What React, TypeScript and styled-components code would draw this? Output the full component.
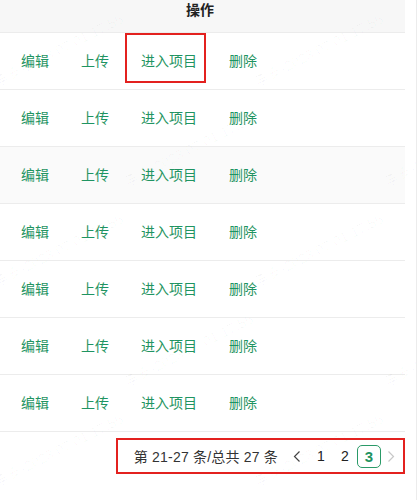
import React from "react";
import styled, { createGlobalStyle, css } from "styled-components";

const GlobalStyle = createGlobalStyle`
  html, body {
    margin: 0;
    padding: 0;
    background: #fff;
  }
  body {
    font-family: "Liberation Sans", "Noto Sans CJK SC", sans-serif;
    font-size: 14px;
    color: #333;
  }
`;

const Page = styled.div`
  position: relative;
  width: 416px;
  height: 500px;
  border-right: 1px solid #ececec;
  overflow: hidden;
`;

const Table = styled.div`
  width: 405px;
  display: flex;
  flex-direction: column;
`;

const HeaderCell = styled.div`
  height: 32px;
  box-sizing: content-box;
  background-color: #f7f7f7;
  border-bottom: 1px solid #ececec;
  display: flex;
  align-items: flex-start;
  justify-content: center;
  padding-right: 5px;
  line-height: 20px;
  font-weight: 700;
  color: #222;
`;

const Row = styled.div<{ $hover?: boolean }>`
  height: 56px;
  border-bottom: 1px solid #ececec;
  background-color: ${({ $hover }) => ($hover ? "#fafafa" : "#fff")};
  display: flex;
  align-items: center;
  gap: 32px;
  padding-left: 21px;
`;

const annotation = css`
  position: relative;

  &::after {
    content: "";
    position: absolute;
    border: 2px solid #e3211f;
    pointer-events: none;
  }
`;

const ActionLink = styled.a<{ $marked?: boolean }>`
  color: #1f9462;
  font-size: 14px;
  line-height: 22px;
  text-decoration: none;
  cursor: pointer;

  ${({ $marked }) =>
    $marked &&
    css`
      ${annotation}
      &::after {
        top: -17px;
        bottom: -11px;
        left: -16px;
        right: -9px;
      }
    `}
`;

const Footer = styled.div`
  display: flex;
  justify-content: flex-end;
  padding-top: 6px;
`;

const Pager = styled.div`
  height: 36px;
  box-sizing: border-box;
  border: 2px solid #e3211f;
  padding: 0 2px 0 16px;
  display: flex;
  align-items: center;
`;

const Summary = styled.span`
  color: #333;
  margin-right: 7px;
  letter-spacing: 0.2px;
`;

const PageItem = styled.span<{ $active?: boolean; $narrow?: boolean }>`
  width: ${({ $narrow }) => ($narrow ? "20px" : "24px")};
  height: 23px;
  box-sizing: border-box;
  display: flex;
  align-items: center;
  justify-content: center;
  color: #222;
  font-size: 14px;
  border-radius: 5px;

  ${({ $active }) =>
    $active &&
    css`
      border: 1px solid #2a9a68;
      color: #1f9462;
      font-weight: 700;
      font-size: 15px;
    `}
`;

const Watermark = styled.div`
  position: absolute;
  inset: 0;
  pointer-events: none;
  overflow: hidden;
`;

const Stamp = styled.span`
  position: absolute;
  white-space: nowrap;
  font-size: 14px;
  color: rgba(0, 0, 0, 0.03);
  transform: rotate(-27deg);
  transform-origin: left bottom;
`;

const Chevron = ({ dir, color }: { dir: "left" | "right"; color: string }) => (
  <svg width="8" height="11" viewBox="0 0 8 11">
    <polyline
      points={dir === "left" ? "6.5,0.5 1.5,5.5 6.5,10.5" : "1.5,0.5 6.5,5.5 1.5,10.5"}
      fill="none"
      stroke={color}
      strokeWidth="1.2"
    />
  </svg>
);

const rows = [0, 1, 2, 3, 4, 5, 6];

const stamps: [number, number][] = [];
for (let r = 0; r < 6; r++) {
  for (let c = 0; c < 3; c++) {
    const x = -130 + c * 260 + (r % 2) * 130;
    const y = -30 + r * 100;
    stamps.push([x, y]);
  }
}

export default function App() {
  return (
    <>
      <GlobalStyle />
      <Page>
        <Table>
          <HeaderCell>操作</HeaderCell>
          {rows.map((i) => (
            <Row key={i} $hover={i === 2}>
              <ActionLink>编辑</ActionLink>
              <ActionLink>上传</ActionLink>
              <ActionLink $marked={i === 0}>进入项目</ActionLink>
              <ActionLink>删除</ActionLink>
            </Row>
          ))}
          <Footer>
            <Pager>
              <Summary>第 21-27 条/总共 27 条</Summary>
              <PageItem>
                <Chevron dir="left" color="#444" />
              </PageItem>
              <PageItem>1</PageItem>
              <PageItem>2</PageItem>
              <PageItem $active>3</PageItem>
              <PageItem $narrow>
                <Chevron dir="right" color="#c8c8c8" />
              </PageItem>
            </Pager>
          </Footer>
        </Table>
        <Watermark>
          {stamps.map(([x, y], k) => (
            <Stamp key={k} style={{ left: x, top: y }}>
              李安-2023/07/01 17:55
            </Stamp>
          ))}
        </Watermark>
      </Page>
    </>
  );
}
